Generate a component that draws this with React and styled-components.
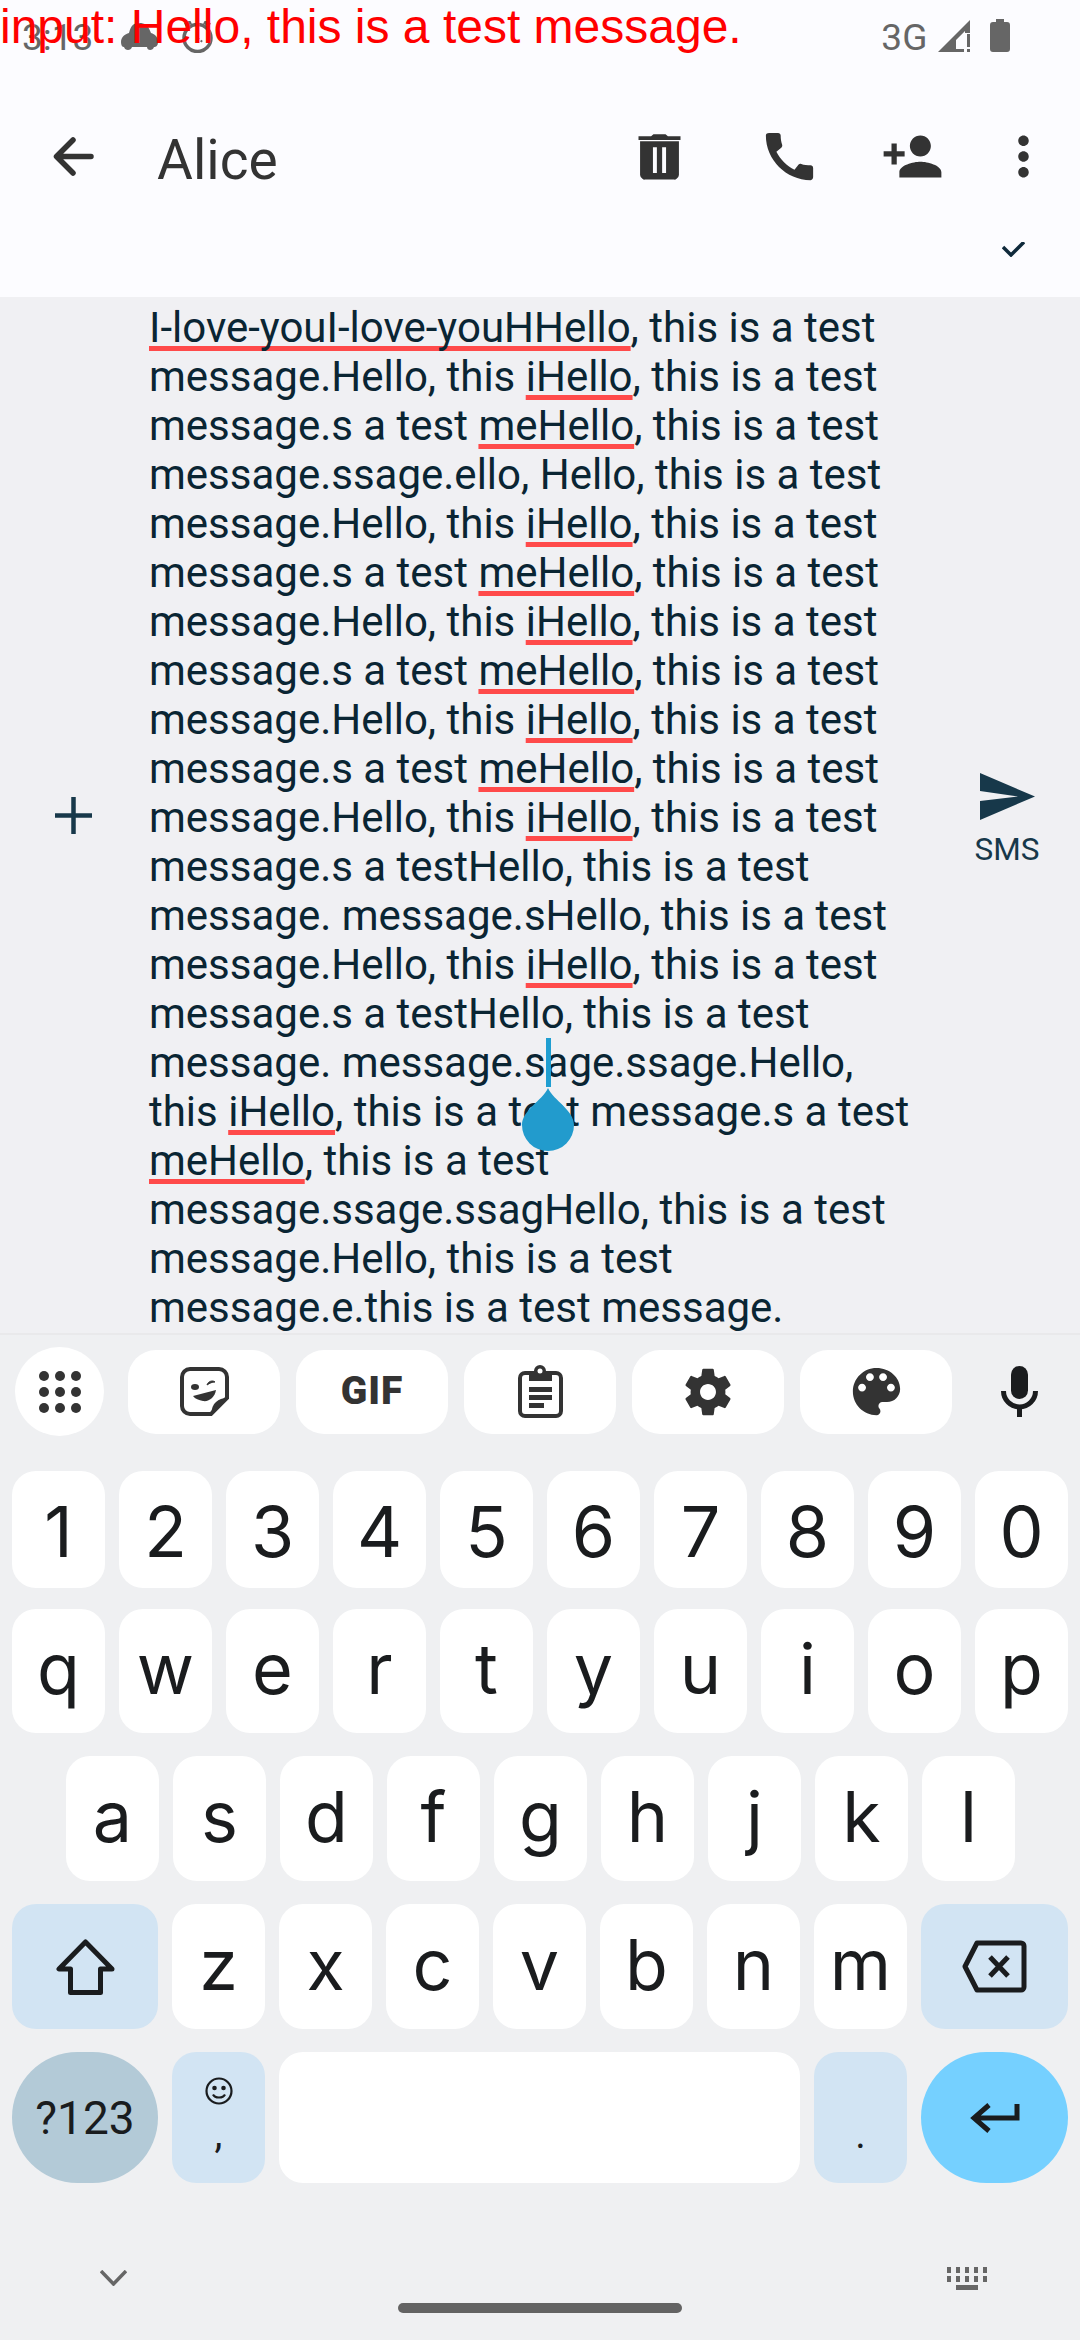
import React from 'react'
import styled, { createGlobalStyle } from 'styled-components'

const GlobalStyle = createGlobalStyle`
  html, body { margin: 0; padding: 0; background: #fcfcff; }
  body { font-family: Roboto, "Noto Sans", sans-serif; }
`

const INK = '#333333'
const NAVY = '#17384a'
const KEY_INK = '#1a1c1e'
const GREY = '#666666'

const Screen = styled.div`
  position: relative;
  width: 1080px;
  height: 2340px;
  overflow: hidden;
  display: flex;
  flex-direction: column;
`

const DebugInput = styled.div`
  position: absolute;
  top: 0;
  left: 0;
  font-family: "Liberation Sans", Arial, sans-serif;
  font-size: 48px;
  line-height: 54px;
  color: #ff0000;
  white-space: nowrap;
`

const Header = styled.header`
  height: 297px;
  flex: none;
  background: #fcfcff;
  overflow: hidden;
`

const StatusBar = styled.div`
  height: 74px;
  padding: 0 74px 0 22px;
  display: flex;
  align-items: center;
  color: ${GREY};
  font-size: 37px;
  box-sizing: border-box;
`

const StatusSlot = styled.span`
  display: flex;
  margin-left: ${p => p.$left || 0}px;
  margin-top: ${p => p.$top || 0}px;
`

const Toolbar = styled.div`
  margin-top: 51px;
  height: 63px;
  padding-right: 25px;
  display: flex;
  align-items: center;
`

const ActionIcon = styled.svg`
  flex: none;
  width: 63px;
  height: 63px;
  margin-left: ${p => p.$left || 0}px;
  fill: ${INK};
`

const Title = styled.div`
  margin-left: 52px;
  margin-right: auto;
  padding-top: 8px;
  font-size: 55px;
  line-height: 63px;
  color: ${INK};
`

const CheckRow = styled.div`
  margin-top: 54px;
  padding-right: 55px;
  display: flex;
  justify-content: flex-end;
`

const Compose = styled.main`
  height: 1036px;
  flex: none;
  display: flex;
  align-items: center;
  background: #f0f0f3;
  overflow: hidden;
`

const AttachCol = styled.div`
  width: 149px;
  flex: none;
  display: flex;
  justify-content: center;
  padding-right: 2px;
  box-sizing: border-box;
`

const MessageCol = styled.div`
  position: relative;
  flex: 1;
  align-self: flex-start;
  padding-top: 6px;
  color: #0a2533;
  font-size: 42px;
  line-height: 49px;
`

const Line = styled.div`
  white-space: nowrap;
  height: 49px;
`

const Misspelt = styled.span`
  text-decoration: underline #ff4a4a;
  text-decoration-thickness: 5px;
  text-underline-offset: 4px;
  text-decoration-skip-ink: none;
`

const CursorHandle = styled.svg`
  position: absolute;
  left: 371px;
  top: 741px;
  width: 56px;
  height: 113px;
`

const SendCol = styled.div`
  width: 136px;
  flex: none;
  display: flex;
  flex-direction: column;
  align-items: center;
  padding: 11px 10px 0 0;
  box-sizing: border-box;
  color: ${NAVY};
`

const SmsLabel = styled.div`
  font-size: 31.5px;
  line-height: 36px;
  margin-top: 12px;
`

const Keyboard = styled.section`
  flex: 1;
  background: #eff0f2;
  border-top: 2px solid #e9e9eb;
  padding-top: 12px;
  box-sizing: border-box;
`

const ToolRow = styled.div`
  height: 89px;
  padding: 0 0 0 15px;
  display: flex;
  align-items: center;
`

const ToolRound = styled.div`
  width: 89px;
  height: 89px;
  border-radius: 50%;
  background: #fff;
  display: flex;
  align-items: center;
  justify-content: center;
  margin-right: 24px;
`

const ToolPill = styled.div`
  width: 152px;
  height: 84px;
  border-radius: 28px;
  background: #fff;
  display: flex;
  align-items: center;
  justify-content: center;
  margin-right: 16px;
`

const GifText = styled.span`
  font-size: 39px;
  line-height: 1;
  font-weight: 900;
  letter-spacing: 1px;
  color: ${INK};
`

const MicSlot = styled.div`
  margin-left: 33px;
  display: flex;
`

const KeyRow = styled.div`
  height: ${p => p.$h}px;
  margin-top: ${p => p.$gap}px;
  padding-left: ${p => p.$inset || 12}px;
  display: flex;
  gap: 14px;
`

const TONES = { plain: '#ffffff', soft: '#d2e4f3', mode: '#b3cad7', enter: '#75d0ff' }

const Key = styled.div`
  width: ${p => p.$w || 93}px;
  flex: none;
  display: flex;
  align-items: center;
  justify-content: center;
  box-sizing: border-box;
  padding-top: ${p => p.$drop || 0}px;
  padding-bottom: ${p => p.$lift || 0}px;
  border-radius: ${p => (p.$round ? '66px' : '24px')};
  background: ${p => TONES[p.$tone || 'plain']};
  color: ${KEY_INK};
  font-family: Inter, Roboto, sans-serif;
  font-size: 70px;
  line-height: 1;
`

const ModeLabel = styled.span`
  font-family: Roboto, sans-serif;
  font-size: 46px;
`

const EmojiKey = styled(Key)`
  flex-direction: column;
  justify-content: flex-start;
  padding-top: 25px;
`

const SubGlyph = styled.span`
  font-family: Roboto, sans-serif;
  font-size: 40px;
  line-height: 40px;
  margin-top: ${p => p.$top || 0}px;
`

const NavArea = styled.div`
  padding-top: 80px;
`

const NavIcons = styled.div`
  height: 30px;
  padding: 0 92px 0 100px;
  display: flex;
  align-items: center;
  justify-content: space-between;
`

const HomeBar = styled.div`
  width: 284px;
  height: 10px;
  margin: 10px auto 0;
  border-radius: 5px;
  background: #636363;
`

const IH = '[iHello], this is a test'
const MH = '[meHello], this is a test'

const MESSAGE_LINES = [
  '[I-love-youI-love-youHHello], this is a test',
  `message.Hello, this ${IH}`,
  `message.s a test ${MH}`,
  'message.ssage.ello, Hello, this is a test',
  `message.Hello, this ${IH}`,
  `message.s a test ${MH}`,
  `message.Hello, this ${IH}`,
  `message.s a test ${MH}`,
  `message.Hello, this ${IH}`,
  `message.s a test ${MH}`,
  `message.Hello, this ${IH}`,
  'message.s a testHello, this is a test',
  'message. message.sHello, this is a test',
  `message.Hello, this ${IH}`,
  'message.s a testHello, this is a test',
  'message. message.sage.ssage.Hello,',
  'this [iHello], this is a test message.s a test',
  MH,
  'message.ssage.ssagHello, this is a test',
  'message.Hello, this is a test',
  'message.e.this is a test message.',
]

const renderLine = (line) =>
  line.split(/(\[[^\]]+\])/).map((part, i) =>
    part.startsWith('[')
      ? <Misspelt key={i}>{part.slice(1, -1)}</Misspelt>
      : <span key={i}>{part}</span>
  )

const NUMBERS = ['1', '2', '3', '4', '5', '6', '7', '8', '9', '0']
const TOP = ['q', 'w', 'e', 'r', 't', 'y', 'u', 'i', 'o', 'p']
const HOME = ['a', 's', 'd', 'f', 'g', 'h', 'j', 'k', 'l']
const BOTTOM = ['z', 'x', 'c', 'v', 'b', 'n', 'm']

const App = () => {
  return (
    <Screen>
      <GlobalStyle />
      <Header>
        <StatusBar>
          <span>3:13</span>
          <StatusSlot $left={28}>
            <svg width="37" height="28" viewBox="0 0 37 28" fill={GREY}>
              <path d="M8 10C10 2 13 0 18 0c6 0 9 2 12 10 4 1 7 4 7 9 0 4-2 5-4 5-1 4-7 4-7 0H11c-1 4-7 4-8 0-2 0-3-2-3-5 0-5 4-8 8-9z" />
            </svg>
          </StatusSlot>
          <StatusSlot $left={22}>
            <svg width="35" height="32" viewBox="0 0 35 32" fill="none" stroke={GREY}>
              <circle cx="17.5" cy="17" r="13.5" strokeWidth="3.5" />
              <path d="M5 4l6-3M30 4l-6-3" strokeWidth="4" />
              <path d="M17.5 9v8l5 4" strokeWidth="2" strokeDasharray="2 2" />
            </svg>
          </StatusSlot>
          <StatusSlot $left={666}>3G</StatusSlot>
          <StatusSlot $left={11} $top={-2}>
            <svg width="33" height="32" viewBox="0 0 33 32" fill={GREY}>
              <path d="M0 32L32 0v13h-5v-2L18 20v9h8v3z" />
              <path d="M29 14h3v13h-3zM29 29h3v3h-3z" />
            </svg>
          </StatusSlot>
          <StatusSlot $left={19} $top={-3}>
            <svg width="20" height="33" viewBox="0 0 20 33" fill={GREY}>
              <path d="M6 0h8v3h3a3 3 0 0 1 3 3v24a3 3 0 0 1-3 3H3a3 3 0 0 1-3-3V6a3 3 0 0 1 3-3h3z" />
            </svg>
          </StatusSlot>
        </StatusBar>
        <Toolbar>
          <ActionIcon $left={42} viewBox="0 0 63 63" fill="none">
            <path d="M49 31.5H16M31 15L14.500 31.500 31 48" fill="none" stroke={INK} strokeWidth="5.500" strokeLinecap="round" strokeLinejoin="round" />
          </ActionIcon>
          <Title>Alice</Title>
          <ActionIcon viewBox="0 0 24 24">
            <path fillRule="evenodd" d="M4.600 6.200h14.800V19a2 2 0 0 1-1 1.600 1 1 0 0 1-.8.200H6.400a1 1 0 0 1-.8-.2 2 2 0 0 1-1-1.600zM9.500 8.500v9.800h1.500V8.500zm3.500 0v9.800h1.500V8.500zM4 4.300h4.800L9.700 3.500h4.600l.9.800H20v1.400H4z" />
          </ActionIcon>
          <ActionIcon $left={67} viewBox="0 0 24 24" preserveAspectRatio="none">
            <path d="M20.010 15.380c-1.230 0-2.420-.2-3.530-.56-.35-.12-.74-.03-1.010.24l-1.570 1.970c-2.830-1.350-5.480-3.900-6.890-6.830l1.950-1.660c.27-.28.35-.67.24-1.020-.37-1.110-.56-2.300-.56-3.530 0-.54-.45-.99-.99-.99H4.190C3.650 3 3 3.240 3 3.990 3 13.280 10.730 21 20.010 21c.71 0 .99-.63.99-1.180v-3.450c0-.54-.45-.99-.99-.99z" />
          </ActionIcon>
          <ActionIcon $left={60} viewBox="0 0 24 24">
            <path d="M15 12c2.210 0 4-1.790 4-4s-1.790-4-4-4-4 1.790-4 4 1.790 4 4 4zm-9-2V7H4v3H1v2h3v3h2v-3h3v-2H6zm9 4c-2.670 0-8 1.340-8 4v2h16v-2c0-2.660-5.330-4-8-4z" />
          </ActionIcon>
          <ActionIcon $left={48} viewBox="0 0 24 24">
            <path d="M12 8c1.100 0 2-.9 2-2s-.9-2-2-2-2 .9-2 2 .9 2 2 2zm0 2c-1.100 0-2 .9-2 2s.9 2 2 2 2-.9 2-2-.9-2-2-2zm0 6c-1.100 0-2 .9-2 2s.9 2 2 2 2-.9 2-2-.9-2-2-2z" />
          </ActionIcon>
        </Toolbar>
        <CheckRow>
          <svg width="23" height="15" viewBox="0 0 23 15" fill="none" stroke="#0f2a3b" strokeWidth="3.500">
            <path d="M1 5l8 8L22 0" />
          </svg>
        </CheckRow>
      </Header>

      <Compose>
        <AttachCol>
          <svg width="37" height="37" viewBox="0 0 37 37" fill="none" stroke={NAVY} strokeWidth="4.500">
            <path d="M18.500 0v37M0 18.500h37" />
          </svg>
        </AttachCol>
        <MessageCol>
          {MESSAGE_LINES.map((line, i) => <Line key={i}>{renderLine(line)}</Line>)}
          <CursorHandle viewBox="0 0 56 113">
            <rect x="26" y="0" width="5" height="49" fill="#1f9ed1" />
            <path d="M28 50C34 63 54 72 54 87a26 26 0 0 1-52 0C2 72 22 63 28 50z" fill="#229bcd" />
          </CursorHandle>
        </MessageCol>
        <SendCol>
          <svg width="55" height="47" viewBox="0 0 55 47" fill={NAVY}>
            <path d="M0 0l55 23.500L0 47V28l38-4.500L0 18z" />
          </svg>
          <SmsLabel>SMS</SmsLabel>
        </SendCol>
      </Compose>

      <Keyboard>
        <ToolRow>
          <ToolRound>
            <svg width="42" height="42" viewBox="0 0 42 42" fill={INK}>
              {[5, 21, 37].map(cy => [5, 21, 37].map(cx => <circle key={`${cx}-${cy}`} cx={cx} cy={cy} r="5" />))}
            </svg>
          </ToolRound>
          <ToolPill>
            <svg width="49" height="49" viewBox="0 0 49 49">
              <path d="M10 2h29a8 8 0 0 1 8 8v21L31 47H10a8 8 0 0 1-8-8V10a8 8 0 0 1 8-8z" fill="none" stroke={INK} strokeWidth="4" />
              <path d="M47 31c-9 0-15 5-16 16z" fill={INK} />
              <ellipse cx="15" cy="20" rx="4" ry="3" fill={INK} />
              <path d="M27 18c1-4 6-5 8-3-3 0-5 1-8 3z" fill={INK} stroke={INK} />
              <path d="M13 29l23-6c-1 7-7 12-13 11-4-1-8-2-10-5z" fill={INK} />
            </svg>
          </ToolPill>
          <ToolPill><GifText>GIF</GifText></ToolPill>
          <ToolPill>
            <svg width="45" height="53" viewBox="0 0 45 53">
              <rect x="2" y="8" width="41" height="43" rx="5" fill="none" stroke={INK} strokeWidth="4" />
              <path d="M11 6h5a6 6 0 0 1 12 0h6v10H11z" fill={INK} />
              <circle cx="22" cy="6" r="2.500" fill="#fff" />
              <path d="M11 22h23v5H11zM11 30h23v5H11zM11 38h15v5H11z" fill={INK} />
            </svg>
          </ToolPill>
          <ToolPill>
            <svg width="58" height="58" viewBox="0 0 24 24" fill={INK}>
              <path fillRule="evenodd" d="M19.140 12.940c.04-.3.06-.61.06-.94 0-.32-.02-.64-.07-.94l2.030-1.580c.18-.14.23-.41.120-.61l-1.920-3.320c-.12-.22-.37-.29-.59-.22l-2.390.96c-.5-.38-1.030-.7-1.620-.94l-.36-2.540c-.04-.24-.24-.41-.48-.41h-3.840c-.24 0-.43.170-.47.410l-.36 2.540c-.59.240-1.130.570-1.620.940l-2.390-.96c-.22-.08-.47 0-.59.220L2.740 8.870c-.12.210-.08.470.120.610l2.030 1.580c-.05.3-.09.630-.09.940s.02.640.07.940l-2.030 1.580c-.18.140-.23.410-.12.610l1.920 3.320c.12.220.37.290.59.220l2.390-.96c.5.380 1.030.7 1.620.94l.36 2.540c.05.240.24.410.48.410h3.840c.24 0 .44-.17.47-.41l.36-2.540c.59-.24 1.130-.56 1.620-.94l2.390.96c.22.08.47 0 .59-.22l1.920-3.320c.12-.22.07-.47-.12-.61l-2.010-1.580zM12 15.300c-1.820 0-3.300-1.480-3.300-3.300s1.480-3.300 3.300-3.300 3.300 1.480 3.300 3.300-1.480 3.300-3.300 3.300z" />
            </svg>
          </ToolPill>
          <ToolPill>
            <svg width="63" height="63" viewBox="0 0 24 24" fill={INK}>
              <path d="M12 3c-4.970 0-9 4.030-9 9s4.030 9 9 9c.83 0 1.500-.67 1.500-1.500 0-.39-.15-.74-.39-1.010-.23-.26-.38-.61-.38-.99 0-.83.67-1.500 1.500-1.500H16c2.760 0 5-2.240 5-5 0-4.420-4.030-8-9-8zm-5.500 9c-.83 0-1.500-.67-1.500-1.500S5.670 9 6.500 9 8 9.670 8 10.500 7.330 12 6.500 12zm3-4C8.670 8 8 7.330 8 6.500S8.670 5 9.500 5s1.500.67 1.500 1.500S10.330 8 9.500 8zm5 0c-.83 0-1.500-.67-1.500-1.500S13.670 5 14.500 5s1.500.67 1.500 1.500S15.330 8 14.500 8zm3 4c-.83 0-1.500-.67-1.500-1.500S16.670 9 17.500 9s1.500.67 1.500 1.500-.67 1.500-1.500 1.500z" />
            </svg>
          </ToolPill>
          <MicSlot>
            <svg width="37" height="51" viewBox="0 0 37 51" fill="none" stroke={KEY_INK}>
              <rect x="10" y="0" width="17" height="33" rx="8.500" fill={KEY_INK} stroke="none" />
              <path d="M2.500 25a16 16 0 0 0 32 0" strokeWidth="5" />
              <path d="M18.500 41v10" strokeWidth="5" />
            </svg>
          </MicSlot>
        </ToolRow>

        <KeyRow $h={117} $gap={35}>
          {NUMBERS.map(k => <Key key={k} $drop={4}>{k}</Key>)}
        </KeyRow>
        <KeyRow $h={124} $gap={21}>
          {TOP.map(k => <Key key={k} $lift={4}>{k}</Key>)}
        </KeyRow>
        <KeyRow $h={125} $gap={23} $inset={66}>
          {HOME.map(k => <Key key={k} $lift={4}>{k}</Key>)}
        </KeyRow>
        <KeyRow $h={125} $gap={23}>
          <Key $w={146} $tone="soft">
            <svg width="59" height="57" viewBox="0 0 59 57" fill="none" stroke={KEY_INK} strokeWidth="5" strokeLinejoin="round">
              <path d="M29.500 4L3 31h11.500v23.500h30V31H56z" />
            </svg>
          </Key>
          {BOTTOM.map(k => <Key key={k} $lift={4}>{k}</Key>)}
          <Key $w={147} $tone="soft">
            <svg width="65" height="53" viewBox="0 0 65 53" fill="none" stroke={KEY_INK} strokeWidth="5" strokeLinejoin="round">
              <path d="M15 3h44a3 3 0 0 1 3 3v41a3 3 0 0 1-3 3H15L3 26.500z" />
              <path d="M28 17l18 19M46 17L28 36" />
            </svg>
          </Key>
        </KeyRow>
        <KeyRow $h={131} $gap={23}>
          <Key $w={146} $tone="mode" $round><ModeLabel>?123</ModeLabel></Key>
          <EmojiKey $tone="soft">
            <svg width="28" height="28" viewBox="0 0 28 28" fill="none" stroke={KEY_INK} strokeWidth="2.200">
              <circle cx="14" cy="14" r="12.500" />
              <circle cx="9.500" cy="11" r="1.200" fill={KEY_INK} />
              <circle cx="18.500" cy="11" r="1.200" fill={KEY_INK} />
              <path d="M8 17.500c2 4 10 4 12 0" />
            </svg>
            <SubGlyph $top={9}>,</SubGlyph>
          </EmojiKey>
          <Key $w={521}> </Key>
          <EmojiKey $tone="soft"><SubGlyph $top={38}>.</SubGlyph></EmojiKey>
          <Key $w={147} $tone="enter" $round>
            <svg width="50" height="30" viewBox="0 0 50 30" fill="none" stroke={KEY_INK} strokeWidth="5">
              <path d="M47 1v14H6M19 2L4 15l15 13" />
            </svg>
          </Key>
        </KeyRow>

        <NavArea>
          <NavIcons>
            <svg width="27" height="16" viewBox="0 0 27 16" fill="none" stroke={GREY} strokeWidth="3.500">
              <path d="M1 1l12.500 13L26 1" />
            </svg>
            <svg width="41" height="23" viewBox="0 0 41 23" fill={GREY}>
              {[0, 9, 18, 27, 36].map(x => <rect key={x} x={x} y="0" width="4" height="6" />)}
              {[0, 9, 18, 27, 36].map(x => <rect key={x} x={x} y="9" width="4" height="6" />)}
              <rect x="9" y="18" width="22" height="5" />
            </svg>
          </NavIcons>
          <HomeBar />
        </NavArea>
      </Keyboard>
      <DebugInput>input: Hello, this is a test message.</DebugInput>
    </Screen>
  )
}

export default App
